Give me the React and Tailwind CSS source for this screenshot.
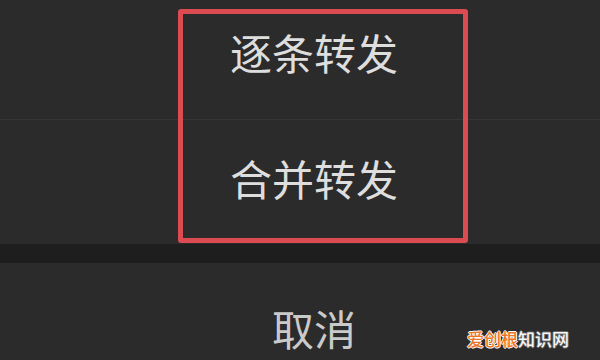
export default function App() {
  const font = { fontFamily: '"Noto Sans CJK SC", "Noto Sans", sans-serif' };
  return (
    <div className="relative w-[600px] h-[360px] overflow-hidden bg-[#2b2b2b]" style={font}>
      <div className="flex flex-col h-full">
        <div className="h-[120px] flex justify-center pl-[28px] pt-[31px] text-[42px] leading-none font-normal text-[#dedede] border-b border-[#363636]">
          逐条转发
        </div>
        <div className="h-[124px] flex justify-center pl-[28px] pt-[37px] text-[42px] leading-none font-normal text-[#dedede]">
          合并转发
        </div>
        <div className="h-[19px] bg-[#1e1e1e]" />
        <div className="flex-1 flex justify-center pl-[28px] pt-[44px] text-[42px] leading-none font-normal text-[#cacaca]">
          取消
        </div>
      </div>
      <div className="absolute left-[178px] top-[9px] w-[290px] h-[234px] border-[5px] border-[#dc4a52] rounded-[3px]" />
      <div className="absolute left-[467px] top-[330px] text-[17px] leading-none font-medium flex">
        <span
          className="text-[#ec7426]"
          style={{ textShadow: "1px 0 0 #fff, -1px 0 0 #fff, 0 1px 0 #fff, 0 -1px 0 #fff" }}
        >
          爱创根
        </span>
        <span
          className="text-[#f6f6f6]"
          style={{ textShadow: "1px 0 0 #666, -1px 0 0 #666, 0 1px 0 #666, 0 -1px 0 #666" }}
        >
          知识网
        </span>
      </div>
    </div>
  );
}
